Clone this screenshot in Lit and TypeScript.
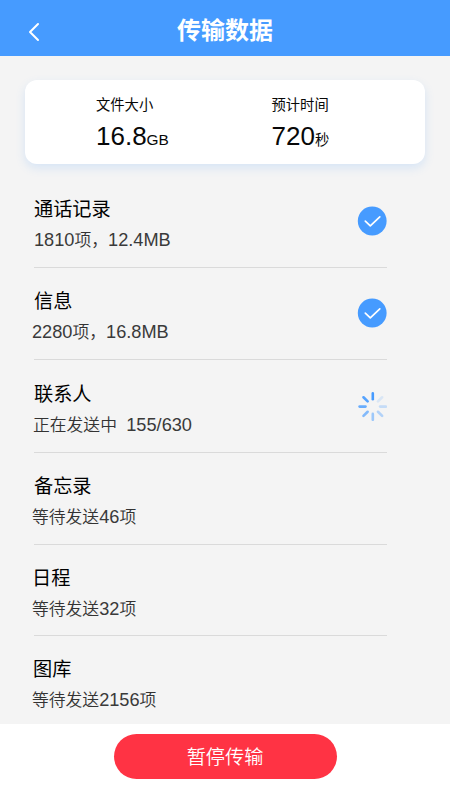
import { LitElement, html, svg, css, nothing } from "lit";
import { customElement, property } from "lit/decorators.js";

type Status = "done" | "sending" | "waiting";

interface TransferItem {
  title: string;
  detail: string;
  status: Status;
}

const ITEMS: TransferItem[] = [
  { title: "通话记录", detail: "1810项，12.4MB", status: "done" },
  { title: "信息", detail: "2280项，16.8MB", status: "done" },
  { title: "联系人", detail: "正在发送中  155/630", status: "sending" },
  { title: "备忘录", detail: "等待发送46项", status: "waiting" },
  { title: "日程", detail: "等待发送32项", status: "waiting" },
  { title: "图库", detail: "等待发送2156项", status: "waiting" },
];

// Spoke opacities, clockwise from twelve o'clock.
const SPOKES = [1, 0.15, 0.27, 0.38, 0.5, 0.65, 0.8, 0.92];

@customElement("status-icon")
export class StatusIcon extends LitElement {
  @property() status: Status = "waiting";

  static styles = css`
    :host { display: block; width: 30px; height: 30px; }
    svg { display: block; }
  `;

  render() {
    if (this.status === "done") {
      return html`<svg width="30" height="30" viewBox="0 0 30 30">
        <circle cx="15.2" cy="15" r="14.4" fill="#469bff" />
        <path d="M8.3 15.2 13.3 19.9 22.8 10.8" fill="none" stroke="#fff" stroke-width="1.7" stroke-linecap="round" stroke-linejoin="round" />
      </svg>`;
    }
    if (this.status === "sending") {
      return html`<svg width="30" height="30" viewBox="0 0 30 30">
        ${SPOKES.map(
          (o, i) => svg`<line x1="15.8" y1="2.4" x2="15.8" y2="8.3" stroke="#469bff" stroke-width="2.6"
            stroke-linecap="round" stroke-opacity=${o} transform=${`rotate(${i * 45} 15.8 15.6)`} />`
        )}
      </svg>`;
    }
    return nothing;
  }
}

@customElement("transfer-row")
export class TransferRow extends LitElement {
  @property({ attribute: false }) item!: TransferItem;

  static styles = css`
    :host { display: flex; justify-content: space-between; box-sizing: border-box; height: 92.1px; padding-top: 19px; }
    .text { margin-left: -2px; }
    .title { font-size: 19.2px; line-height: 29px; color: #000; padding-left: var(--title-inset, 2px); }
    .detail { height: 32px; font-size: 16.8px; line-height: 32px; color: #333; font-weight: 350; white-space: pre; padding-left: var(--detail-inset, 0); }
    .latin { font-size: 18.2px; color: #3a3a3a; }
    status-icon { margin-top: 11px; }
  `;

  render() {
    // Digits and units are set slightly larger than the Chinese text beside them.
    const runs = this.item.detail.split(/([\d./A-Z]+)/).filter(Boolean);
    return html`
      <div class="text">
        <div class="title">${this.item.title}</div>
        <div class="detail">${runs.map((run) => (/^\d/.test(run) ? html`<span class="latin">${run}</span>` : run))}</div>
      </div>
      <status-icon .status=${this.item.status}></status-icon>
    `;
  }
}

@customElement("app-root")
export class AppRoot extends LitElement {
  static styles = css`
    :host {
      display: flex;
      flex-direction: column;
      height: 800px;
      overflow: hidden;
      background: #f4f4f4;
      font-family: "Liberation Sans", "Noto Sans CJK SC", sans-serif;
    }
    .header {
      display: grid;
      grid-template-columns: 60px 1fr 60px;
      align-items: center;
      flex: none;
      height: 55.5px;
      box-sizing: border-box;
      padding-top: 5px;
      background: #469bff;
      color: #fff;
    }
    .back { display: block; margin: 3px 0 0 27px; }
    .heading { margin: 0; padding-top: 1px; font-size: 24px; line-height: 36px; font-weight: 700; text-align: center; }
    .summary {
      display: flex;
      flex: none;
      box-sizing: border-box;
      height: 83.5px;
      margin: 24.5px 25px 0;
      padding: 14px 0 0 71px;
      background: #fff;
      border-radius: 12px;
      box-shadow: 0 4px 10px rgba(70, 155, 255, 0.17);
      color: #080808;
    }
    .metric { flex: none; width: 175.5px; }
    .metric + .metric { width: 120px; }
    .label { font-size: 14.3px; line-height: 22px; }
    .value { display: flex; align-items: baseline; font-size: 26px; line-height: 40px; }
    .unit { font-size: 15.4px; }
    .unit.cjk { font-size: 14.3px; }
    .list { flex: 1; min-height: 0; overflow: hidden; padding: 12.4px 63px 0 34px; }
    transfer-row { border-bottom: 1px solid #dadada; }
    transfer-row:last-child { border-bottom: 0; }
    transfer-row:nth-child(1) { --detail-inset: 2px; }
    transfer-row:nth-child(3) { --detail-inset: 1px; height: 92.8px; padding-top: 19.5px; }
    transfer-row:nth-child(5) { --title-inset: 0; height: 91.5px; }
    transfer-row:nth-child(6) { --title-inset: 1px; }
    .footer { display: flex; justify-content: center; flex: none; height: 76px; box-sizing: border-box; padding-top: 10px; background: #fff; }
    .pause {
      width: 223px;
      height: 45px;
      padding: 0 0 2px;
      border: 0;
      border-radius: 23px;
      background: #ff3344;
      color: #fff;
      font-family: inherit;
      font-size: 19.2px;
      font-weight: 350;
    }
  `;

  render() {
    return html`
      <div class="header">
        <svg class="back" width="14" height="20" viewBox="0 0 14 20">
          <path d="M11 2 3 10 11 18" fill="none" stroke="#fff" stroke-width="2" stroke-linecap="round" stroke-linejoin="round" />
        </svg>
        <h1 class="heading">传输数据</h1>
      </div>
      <div class="summary">
        <div class="metric">
          <div class="label">文件大小</div>
          <div class="value">16.8<span class="unit">GB</span></div>
        </div>
        <div class="metric">
          <div class="label">预计时间</div>
          <div class="value">720<span class="unit cjk">秒</span></div>
        </div>
      </div>
      <div class="list">${ITEMS.map((item) => html`<transfer-row .item=${item}></transfer-row>`)}</div>
      <div class="footer"><button class="pause">暂停传输</button></div>
    `;
  }
}
